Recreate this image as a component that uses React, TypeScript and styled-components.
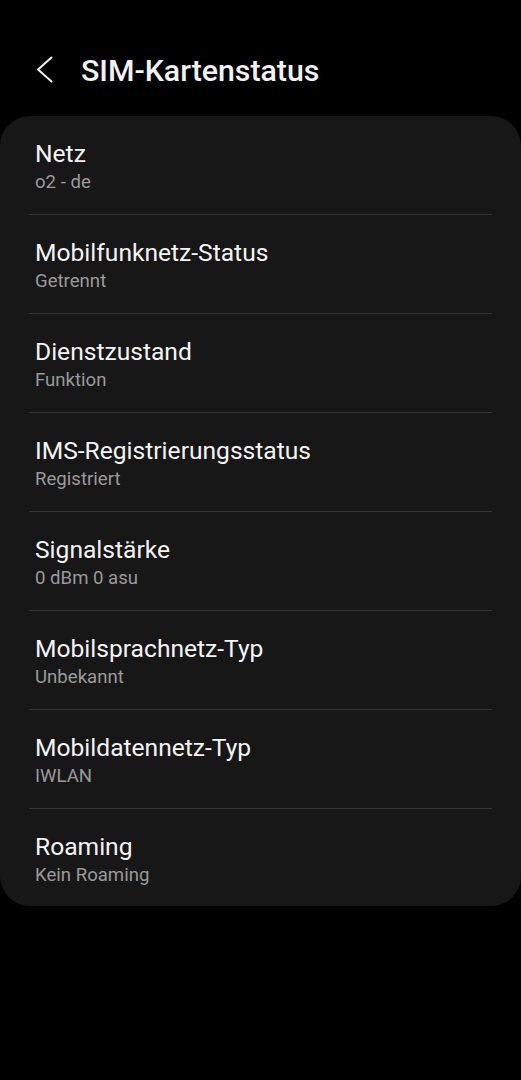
import React from 'react';
import styled, { createGlobalStyle } from 'styled-components';

const Global = createGlobalStyle`
  html, body { margin: 0; padding: 0; background: #000; }
  body { font-family: Roboto, "Noto Sans", sans-serif; -webkit-font-smoothing: antialiased; }
`;

const Screen = styled.div`
  width: 521px;
  height: 1080px;
  background: #000;
`;

const Header = styled.div`
  height: 116px;
  display: flex;
  align-items: center;
  padding: 24px 0 0 33px;
  box-sizing: border-box;
`;

const BackButton = styled.div`
  width: 24px;
  height: 30px;
  display: flex;
  align-items: center;
  margin-right: 24px;
`;

const Title = styled.h1`
  margin: 0;
  font-size: 30.3px;
  font-weight: 500;
  color: #f2f2f2;
`;

const Card = styled.div`
  background: #171717;
  border-radius: 30px;
`;

const Row = styled.div<{ $last?: boolean }>`
  position: relative;
  height: ${(p) => (p.$last ? 97 : 99)}px;
  padding: 24px 35px 0;
  box-sizing: border-box;
  &::after {
    content: '';
    display: ${(p) => (p.$last ? 'none' : 'block')};
    position: absolute;
    left: 29px;
    right: 29px;
    bottom: 0;
    height: 1px;
    background: #343434;
  }
`;

const RowTitle = styled.div`
  font-size: 24.6px;
  line-height: 28px;
  color: #f4f4f4;
`;

const RowValue = styled.div`
  margin-top: 3px;
  font-size: 18.6px;
  line-height: 22px;
  color: #9a9a9a;
`;

const items = [
  ['Netz', 'o2 - de'],
  ['Mobilfunknetz-Status', 'Getrennt'],
  ['Dienstzustand', 'Funktion'],
  ['IMS-Registrierungsstatus', 'Registriert'],
  ['Signalstärke', '0 dBm 0 asu'],
  ['Mobilsprachnetz-Typ', 'Unbekannt'],
  ['Mobildatennetz-Typ', 'IWLAN'],
  ['Roaming', 'Kein Roaming'],
];

export default function App() {
  return (
    <Screen>
      <Global />
      <Header>
        <BackButton>
          <svg width="22" height="28" viewBox="0 0 22 28" fill="none">
            <path d="M18.5 1.5 L5 13.5 L18.5 25.5" stroke="#f2f2f2" strokeWidth="2" strokeLinecap="round" strokeLinejoin="round" />
          </svg>
        </BackButton>
        <Title>SIM-Kartenstatus</Title>
      </Header>
      <Card>
        {items.map(([t, v], i) => (
          <Row key={t} $last={i === items.length - 1}>
            <RowTitle>{t}</RowTitle>
            <RowValue>{v}</RowValue>
          </Row>
        ))}
      </Card>
    </Screen>
  );
}
